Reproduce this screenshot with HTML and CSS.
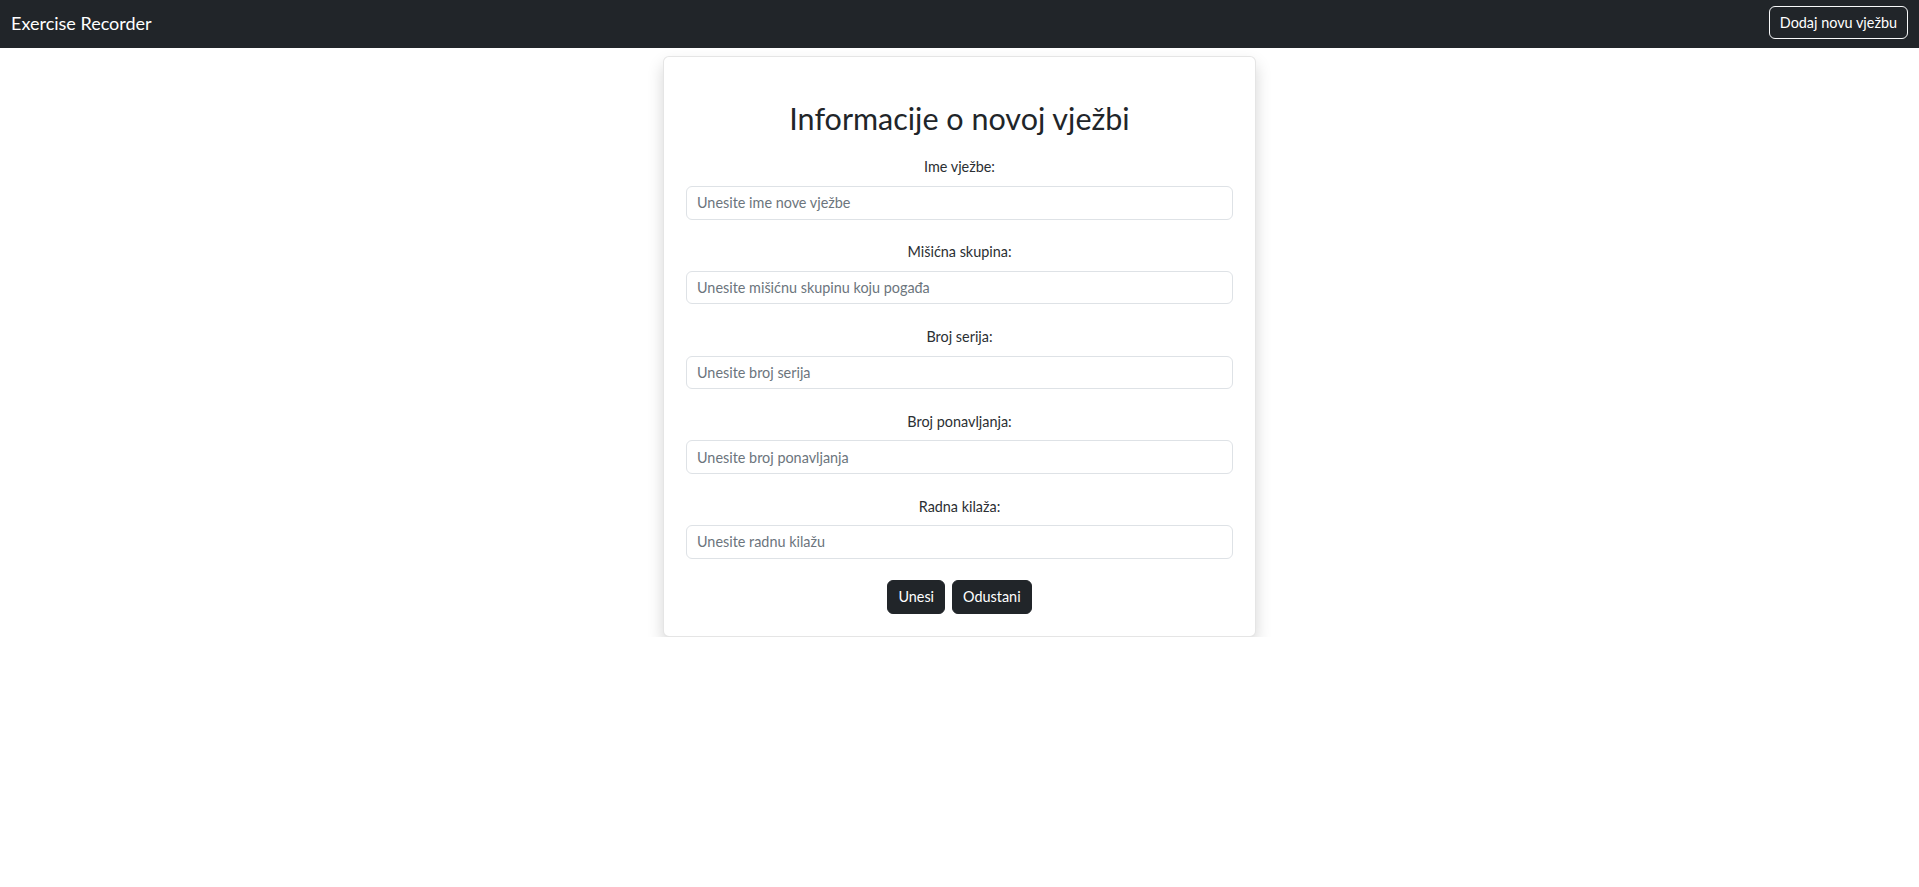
FILE: index.html
```html
<!DOCTYPE html>
<html lang="hr">
<head>
<meta charset="utf-8">
<title>Exercise Recorder</title>
<link rel="stylesheet" href="styles.css">
</head>
<body>
<nav class="navbar">
  <span class="brand">Exercise Recorder</span>
  <button class="btn-outline" type="button">Dodaj novu vježbu</button>
</nav>
<main class="main">
  <form class="card">
    <h2 class="title">Informacije o novoj vježbi</h2>
    <div class="group">
      <label class="label" for="ime">Ime vježbe:</label>
      <input class="input" id="ime" type="text" placeholder="Unesite ime nove vježbe">
    </div>
    <div class="group">
      <label class="label" for="misicna">Mišićna skupina:</label>
      <input class="input" id="misicna" type="text" placeholder="Unesite mišićnu skupinu koju pogađa">
    </div>
    <div class="group">
      <label class="label" for="serije">Broj serija:</label>
      <input class="input" id="serije" type="text" placeholder="Unesite broj serija">
    </div>
    <div class="group">
      <label class="label" for="ponavljanja">Broj ponavljanja:</label>
      <input class="input" id="ponavljanja" type="text" placeholder="Unesite broj ponavljanja">
    </div>
    <div class="group">
      <label class="label" for="kilaza">Radna kilaža:</label>
      <input class="input" id="kilaza" type="text" placeholder="Unesite radnu kilažu">
    </div>
    <div class="actions">
      <button class="btn-dark" type="button">Unesi</button>
      <button class="btn-dark" type="button">Odustani</button>
    </div>
  </form>
</main>
</body>
</html>
```

FILE: styles.css
```css
* { box-sizing: border-box; }

body {
  margin: 0;
  background: #fff;
  color: #212529;
  font-family: Lato, "Open Sans", sans-serif;
}

.navbar {
  height: 48px;
  background: #212529;
  display: flex;
  justify-content: space-between;
  align-items: flex-start;
  padding: 6px 11px 0 11px;
}

.brand {
  color: #fff;
  font-size: 18px;
  line-height: 30px;
  margin-top: 2px;
}

.btn-outline {
  font-family: inherit;
  font-size: 14.4px;
  line-height: 21px;
  color: #fff;
  background: transparent;
  border: 1px solid #f8f9fa;
  border-radius: 6px;
  padding: 5px 10px;
  height: 33px;
}

.main {
  padding-top: 8px;
}

.card {
  width: 593px;
  margin: 0 auto;
  background: #fff;
  border: 1px solid rgba(0, 0, 0, 0.1);
  border-radius: 6px;
  box-shadow: 0 8px 16px rgba(0, 0, 0, 0.17);
  padding: 22px 22px 22px;
}

.title {
  margin: 20px 0 19px;
  text-align: center;
  font-size: 30.5px;
  font-weight: 400;
  line-height: 38.4px;
  color: #212529;
}

.group {
  display: flex;
  flex-direction: column;
  margin-bottom: 21.6px;
}

.label {
  text-align: center;
  font-size: 14.4px;
  line-height: 21.6px;
  margin-bottom: 8px;
  color: #2b2f33;
}

.input {
  height: 33.6px;
  font-family: inherit;
  font-size: 14.4px;
  color: #212529;
  border: 1px solid #dee2e6;
  border-radius: 6px;
  padding: 0 10px;
  outline: none;
}

.input::placeholder {
  color: #6c757d;
}

.actions {
  display: flex;
  justify-content: center;
  gap: 7px;
}

.btn-dark {
  font-family: inherit;
  font-size: 14.4px;
  line-height: 21.6px;
  height: 33.6px;
  color: #fff;
  background: #212529;
  border: 1px solid #212529;
  border-radius: 6px;
  padding: 0 10px;
}
```
